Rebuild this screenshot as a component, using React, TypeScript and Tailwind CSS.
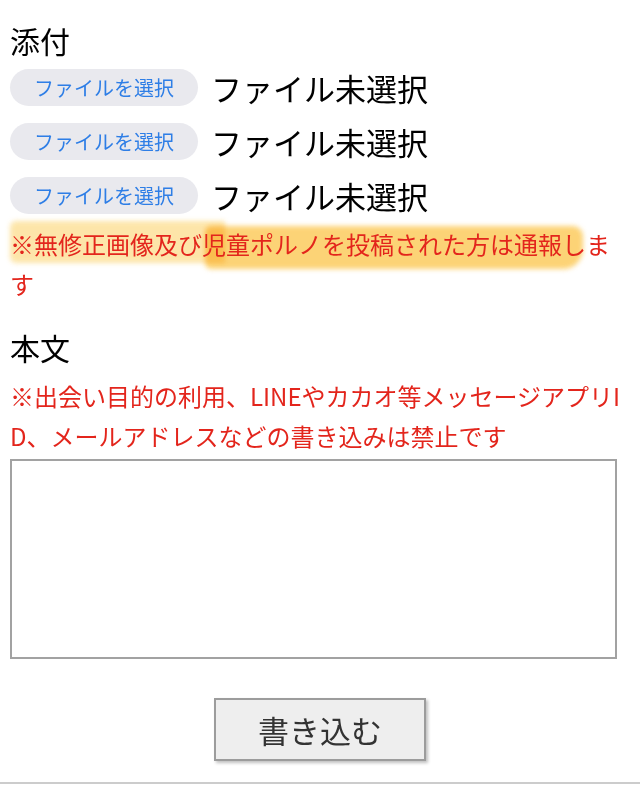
import React from "react";

const font = { fontFamily: '"Noto Sans CJK JP", "Noto Sans", sans-serif' };

function FileRow() {
  return (
    <div className="flex items-center h-[37px]">
      <div className="h-[37px] w-[188px] rounded-full bg-[#e9e9ee] flex items-center justify-center text-[20px] leading-none text-[#2e7ee6]">
        ファイルを選択
      </div>
      <div className="ml-[13px] text-[31px] leading-none text-black tracking-[0px]">ファイル未選択</div>
    </div>
  );
}

export default function App() {
  return (
    <div style={font} className="w-[640px] h-[785px] overflow-hidden bg-white flex flex-col">
      <div className="px-[10px] pt-[22px] flex flex-col">
        <div className="text-[30px] leading-[36px] text-black">添付</div>
        <div className="mt-[11px] flex flex-col gap-[17px]">
          <FileRow />
          <FileRow />
          <FileRow />
        </div>
        <div className="relative mt-[10px]">
          <div className="absolute left-0 top-[-3px] w-[215px] h-[42px] rounded-l-[6px] bg-[#fde3a0] opacity-90 blur-[2.5px] mix-blend-multiply" />
          <div className="absolute left-[195px] top-[2px] w-[378px] h-[43px] rounded-tr-[10px] rounded-br-[20px] rounded-l-[6px] bg-[#fcc853] opacity-80 blur-[2.5px] mix-blend-multiply" />
          <p className="relative text-[24px] leading-[40px] text-[#e3251c]">
            ※無修正画像及び児童ポルノを投稿された方は通報します
          </p>
        </div>
        <div className="mt-[25px] text-[30px] leading-[36px] text-black">本文</div>
        <p className="mt-[11px] text-[24px] leading-[40px] text-[#e3251c] break-all">
          ※出会い目的の利用、LINEやカカオ等メッセージアプリID、メールアドレスなどの書き込みは禁止です
        </p>
        <textarea className="mt-[3px] w-[607px] h-[200px] border-2 border-[#a2a2a2] bg-white resize-none outline-none" />
        <div className="mt-[39px] flex justify-center">
          <button className="w-[212px] h-[63px] border-2 border-[#9c9c9c] bg-[#eeeeee] text-[31px] leading-none text-[#333333] shadow-[2px_2px_3px_rgba(0,0,0,0.25)]">
            書き込む
          </button>
        </div>
      </div>
      <div className="mt-[21px] h-[2px] w-full bg-[#cccccc]" />
    </div>
  );
}
